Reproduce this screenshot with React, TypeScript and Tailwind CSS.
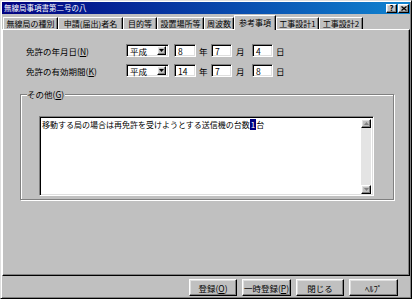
import React from "react";

const FONT = '"Noto Sans CJK JP", "Noto Sans", sans-serif';

const raised =
  "border border-t-white border-l-white border-r-black border-b-black shadow-[inset_-1px_-1px_#808080,inset_1px_1px_#dfdfdf] bg-[#c0c0c0]";
const sunken =
  "border border-t-[#808080] border-l-[#808080] border-r-white border-b-white shadow-[inset_1px_1px_#000,inset_-1px_-1px_#dfdfdf]";

function Tab({ label, w, active }: { label: string; w: number; active?: boolean }) {
  if (active) {
    return (
      <div
        className="relative z-10 -mb-[1px] flex h-[15px] items-start justify-center border-l border-t border-r border-l-white border-t-white border-r-black bg-[#c0c0c0] pt-[1px] text-[8px] leading-[11px] text-black shadow-[inset_-1px_0_#808080]"
        style={{ width: w }}
      >
        {label}
      </div>
    );
  }
  return (
    <div
      className="flex h-[12px] items-start justify-center border-l border-t border-r border-l-white border-t-white border-r-black bg-[#c0c0c0] text-[8px] leading-[11px] text-black shadow-[inset_-1px_0_#808080]"
      style={{ width: w }}
    >
      {label}
    </div>
  );
}

function Select() {
  return (
    <div className={`flex h-[13px] w-[43px] items-center justify-between bg-white pl-[3px] pr-[2px] ${sunken}`}>
      <span className="text-[8.5px] leading-[10px] text-black">平成</span>
      <div className={`flex h-[9px] w-[9px] items-center justify-center ${raised}`}>
        <svg width="5" height="3" viewBox="0 0 5 3">
          <path d="M0 0h5L2.5 3z" fill="#000" />
        </svg>
      </div>
    </div>
  );
}

function Field({ v, w }: { v: string; w: number }) {
  return (
    <div
      className={`flex h-[13px] items-center bg-white pl-[3px] text-[8.5px] leading-[10px] text-black ${sunken}`}
      style={{ width: w }}
    >
      {v}
    </div>
  );
}

function DateRow({ label, acc, y, m, d }: { label: string; acc: string; y: string; m: string; d: string }) {
  return (
    <div className="flex h-[13px] items-center text-[8.5px] leading-[10px] text-black">
      <div className="w-[100px]">
        {label}(<span className="underline">{acc}</span>)
      </div>
      <Select />
      <div className="ml-[5px]">
        <Field v={y} w={22} />
      </div>
      <span className="ml-[3px] w-[9px]">年</span>
      <div className="ml-[3px]">
        <Field v={m} w={21} />
      </div>
      <span className="ml-[4px] w-[9px]">月</span>
      <div className="ml-[7px]">
        <Field v={d} w={21} />
      </div>
      <span className="ml-[3px]">日</span>
    </div>
  );
}

function ScrollArrow({ up }: { up?: boolean }) {
  return (
    <div className={`flex h-[9px] w-[10px] items-center justify-center ${raised}`}>
      <svg width="5" height="3" viewBox="0 0 5 3">
        {up ? (
          <path d="M0 3h5L2.5 0z" fill="#808080" />
        ) : (
          <path d="M0 0h5L2.5 3z" fill="#808080" />
        )}
      </svg>
    </div>
  );
}

function Btn({ children, w }: { children: React.ReactNode; w: number }) {
  return (
    <div
      className={`flex h-[17px] items-center justify-center text-[8.5px] leading-[10px] text-black ${raised}`}
      style={{ width: w }}
    >
      {children}
    </div>
  );
}

export default function App() {
  return (
    <div
      className="flex h-[299px] w-[412px] flex-col border border-t-[#dfdfdf] border-l-[#dfdfdf] border-r-black border-b-black bg-[#c0c0c0] p-[1px] shadow-[inset_1px_1px_white,inset_-1px_-1px_#808080]"
      style={{ fontFamily: FONT }}
    >
      {/* Title bar */}
      <div className="flex h-[12px] items-center justify-between bg-[linear-gradient(to_right,#000080,#1084d0)] pl-[2px] pr-[1px]">
        <span className="text-[7.5px] leading-[10px] text-white">無線局事項書第二号の八</span>
        <div className="flex items-center gap-[1px]">
          <div className={`flex h-[9px] w-[11px] items-center justify-center text-[8px] font-bold leading-[8px] text-black ${raised}`}>
            ?
          </div>
          <div className={`flex h-[9px] w-[11px] items-center justify-center ${raised}`}>
            <svg width="6" height="5" viewBox="0 0 6 5">
              <path d="M0.5 0.5L5.5 4.5M5.5 0.5L0.5 4.5" stroke="#000" strokeWidth="1.3" />
            </svg>
          </div>
        </div>
      </div>

      {/* Tabs */}
      <div className="mt-[1px] flex h-[14px] items-end pl-[1px]">
        <Tab label="無線局の種別" w={55} />
        <Tab label="申請(届出)者名" w={65} />
        <Tab label="目的等" w={34} />
        <Tab label="設置場所等" w={47} />
        <Tab label="周波数" w={30} />
        <Tab label="参考事項" w={42} active />
        <Tab label="工事設計1" w={43} />
        <Tab label="工事設計2" w={44} />
      </div>

      {/* Panel */}
      <div className="flex h-[247px] w-[408px] flex-col border border-t-white border-l-white border-r-black border-b-black shadow-[inset_-1px_-1px_#808080]">
        <div className="ml-[23px] mt-[14px] flex flex-col gap-[7px]">
          <DateRow label="免許の年月日" acc="N" y="8" m="7" d="4" />
          <DateRow label="免許の有効期間" acc="K" y="14" m="7" d="8" />
        </div>

        {/* Group box */}
        <div className="relative ml-[17px] mt-[17px] h-[106px] w-[374px] border border-[#808080] shadow-[inset_1px_1px_white,1px_1px_white]">
          <div className="absolute left-[6px] top-[-7px] bg-[#c0c0c0] pr-[1px] text-[8.5px] leading-[12px] text-black">
            その他(<span className="underline">G</span>)
          </div>
          <div className={`ml-[18px] mt-[21px] flex h-[80px] w-[335px] bg-white ${sunken} p-[2px] pb-[1px]`}>
            <div className="flex-1 pt-[1px] text-[8px] leading-[10px] text-black">
              移動する局の場合は再免許を受けようとする送信機の台数
              <span className="bg-[#000080] px-[1px] text-white">1</span>台
            </div>
            <div className="flex w-[10px] flex-col justify-between bg-[#e4e4e4]">
              <ScrollArrow up />
              <ScrollArrow />
            </div>
          </div>
        </div>
      </div>

      {/* Buttons */}
      <div className="mt-[3px] flex justify-end gap-[5px] pr-[12px]">
        <Btn w={48}>
          登録(<span className="underline">O</span>)
        </Btn>
        <Btn w={49}>
          一時登録(<span className="underline">P</span>)
        </Btn>
        <Btn w={48}>閉じる</Btn>
        <Btn w={49}>ﾍﾙﾌﾟ</Btn>
      </div>
    </div>
  );
}
